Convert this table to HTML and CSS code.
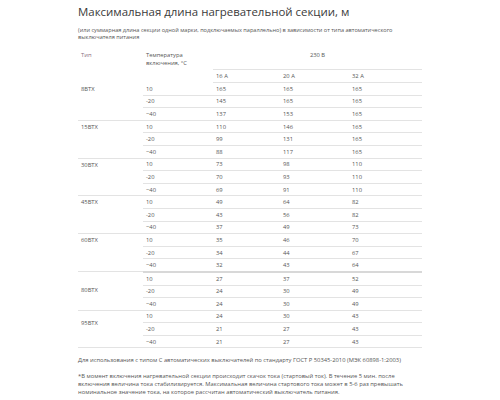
FILE: index.html
```html
<!DOCTYPE html>
<html lang="ru">
<head>
<meta charset="utf-8">
<link rel="stylesheet" href="styles.css">
</head>
<body>
<div class="page">
  <h1 class="title">Максимальная длина нагревательной секции, м</h1>
  <p class="subtitle">(или суммарная длина секции одной марки, подключаемых параллельно) в зависимости от типа автоматического выключателя питания</p>
  <table class="spec">
    <colgroup>
      <col class="c1"><col class="c2"><col class="c3"><col class="c4"><col class="c5">
    </colgroup>
    <thead>
      <tr class="h1">
        <th rowspan="2" class="type">Тип</th>
        <th rowspan="2">Температура<br>включения, °С</th>
        <th colspan="3" class="volt">230 В</th>
      </tr>
      <tr class="h2">
        <th>16 А</th><th>20 А</th><th>32 А</th>
      </tr>
    </thead>
    <tbody>
      <tr class="g"><td rowspan="3" class="name">8ВТХ</td><td>10</td><td>165</td><td>165</td><td>165</td></tr>
      <tr><td>-20</td><td>145</td><td>165</td><td>165</td></tr>
      <tr><td>−40</td><td>137</td><td>153</td><td>165</td></tr>
      <tr class="g"><td rowspan="3" class="name">15ВТХ</td><td>10</td><td>110</td><td>146</td><td>165</td></tr>
      <tr><td>-20</td><td>99</td><td>131</td><td>165</td></tr>
      <tr><td>−40</td><td>88</td><td>117</td><td>165</td></tr>
      <tr class="g"><td rowspan="3" class="name">30ВТХ</td><td>10</td><td>73</td><td>98</td><td>110</td></tr>
      <tr><td>-20</td><td>70</td><td>93</td><td>110</td></tr>
      <tr><td>−40</td><td>69</td><td>91</td><td>110</td></tr>
      <tr class="g"><td rowspan="3" class="name">45ВТХ</td><td>10</td><td>49</td><td>64</td><td>82</td></tr>
      <tr><td>-20</td><td>43</td><td>56</td><td>82</td></tr>
      <tr><td>−40</td><td>37</td><td>49</td><td>73</td></tr>
      <tr class="g"><td rowspan="3" class="name">60ВТХ</td><td>10</td><td>35</td><td>46</td><td>70</td></tr>
      <tr><td>-20</td><td>34</td><td>44</td><td>67</td></tr>
      <tr class="last"><td>−40</td><td>32</td><td>43</td><td>64</td></tr>
      <tr class="g"><td rowspan="3" class="name mid">80ВТХ</td><td>10</td><td>27</td><td>37</td><td>52</td></tr>
      <tr><td>-20</td><td>24</td><td>30</td><td>49</td></tr>
      <tr><td>−40</td><td>24</td><td>30</td><td>49</td></tr>
      <tr class="g"><td rowspan="3" class="name up">95ВТХ</td><td>10</td><td>24</td><td>30</td><td>43</td></tr>
      <tr><td>-20</td><td>21</td><td>27</td><td>43</td></tr>
      <tr><td>−40</td><td>21</td><td>27</td><td>43</td></tr>
    </tbody>
  </table>
  <p class="note">Для использования с типом С автоматических выключателей по стандарту ГОСТ Р 50345-2010 (МЭК 60898-1:2003)</p>
  <p class="foot">*В момент включения нагревательной секции происходит скачок тока (стартовый ток). В течение 5 мин. после<br>включения величина тока стабилизируется. Максимальная величина стартового тока может в 5-6 раз превышать<br>номинальное значение тока, на которое рассчитан автоматический выключатель питания.</p>
</div>
</body>
</html>
```

FILE: styles.css
```css
html, body {
  margin: 0;
  padding: 0;
  background: #ffffff;
}

.page {
  width: 344px;
  padding: 4px 0 0 78px;
  font-family: "Open Sans", "DejaVu Sans", sans-serif;
  color: #555555;
}

.title {
  margin: 0;
  font-size: 11.45px;
  line-height: 16px;
  font-weight: 400;
  color: #3a3a3a;
}

.subtitle {
  margin: 7px 0 0 0;
  font-size: 5.6px;
  line-height: 7px;
  color: #555555;
}

.spec {
  margin-top: 8px;
  width: 344px;
  border-collapse: collapse;
  table-layout: fixed;
  font-size: 5.8px;
}

.c1 { width: 65px; }
.c2 { width: 70px; }
.c3 { width: 67px; }
.c4 { width: 69px; }
.c5 { width: 73px; }

.spec th {
  font-weight: 400;
  text-align: left;
  vertical-align: top;
  padding: 2px 3px 0 3px;
  line-height: 8px;
  color: #555555;
}

.spec th.type {
  color: #8a6f80;
}

.spec th.volt {
  text-align: center;
  height: 18px;
  border-bottom: 1px solid #e3e3e3;
}

.spec .h2 th {
  vertical-align: middle;
  padding-top: 0;
  height: 12px;
  border-bottom: 1px solid #e3e3e3;
}

.spec td {
  padding: 1.8px 3px;
  line-height: 8px;
  vertical-align: middle;
  border-bottom: 1px solid #e3e3e3;
  color: #555555;
}

.spec td.name {
  vertical-align: top;
  padding-top: 2px;
}

.spec td.name.mid {
  vertical-align: middle;
  padding-top: 0;
}

.spec td.name.up {
  vertical-align: middle;
  padding-top: 0;
  padding-bottom: 12px;
}

.spec tr.last td {
  border-bottom: 2px solid #d8d8d8;
}

.note {
  margin: 8px 0 0 0;
  font-size: 5.8px;
  line-height: 8px;
}

.foot {
  margin: 8px 0 0 0;
  font-size: 5.8px;
  line-height: 8px;
}
```
